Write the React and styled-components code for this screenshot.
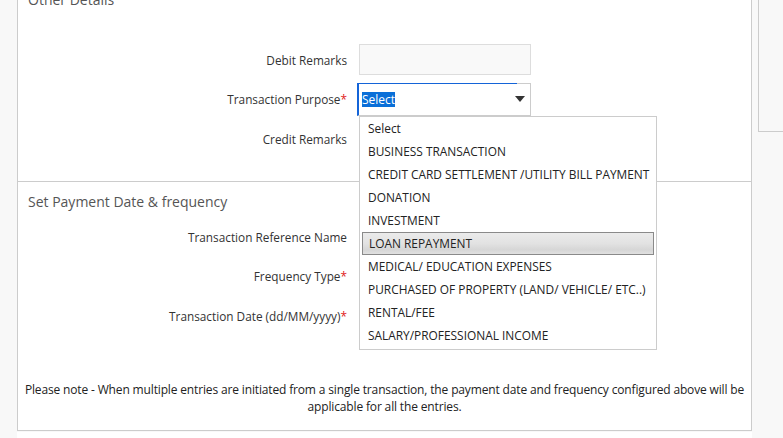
import styled, { createGlobalStyle } from "styled-components";

const purposes = [
  "Select",
  "BUSINESS TRANSACTION",
  "CREDIT CARD SETTLEMENT /UTILITY BILL PAYMENT",
  "DONATION",
  "INVESTMENT",
  "LOAN REPAYMENT",
  "MEDICAL/ EDUCATION EXPENSES",
  "PURCHASED OF PROPERTY (LAND/ VEHICLE/ ETC..)",
  "RENTAL/FEE",
  "SALARY/PROFESSIONAL INCOME",
];

const GlobalStyle = createGlobalStyle`
  html, body {
    margin: 0;
    background: #f8f8f8;
    font-family: "Open Sans", "Noto Sans", sans-serif;
    color: #333;
    overflow: hidden;
  }
`;

const App = () => {
  return (
    <>
      <GlobalStyle />
      <Page>
        <Panel>
          <Section $divided>
            <SectionTitle>Other Details</SectionTitle>
            <FormGrid>
              <Label>Debit Remarks</Label>
              <TextInput />
              <Label>
                Transaction Purpose<Required>*</Required>
              </Label>
              <SelectWrap>
                <SelectBox>
                  <Selected>Select</Selected>
                  <Arrow />
                </SelectBox>
                <DropList>
                  {purposes.map((p) => (
                    <DropItem key={p} $active={p === "LOAN REPAYMENT"}>
                      {p}
                    </DropItem>
                  ))}
                </DropList>
              </SelectWrap>
              <Label>Credit Remarks</Label>
              <TextInput />
            </FormGrid>
          </Section>
          <Section>
            <SectionTitle $second>Set Payment Date &amp; frequency</SectionTitle>
            <FormGrid>
              <Label>Transaction Reference Name</Label>
              <TextInput />
              <Label>
                Frequency Type<Required>*</Required>
              </Label>
              <TextInput />
              <Label>
                Transaction Date (dd/MM/yyyy)<Required>*</Required>
              </Label>
              <TextInput />
            </FormGrid>
            <Note>
              Please note - When multiple entries are initiated from a single
              transaction, the payment date and frequency configured above will
              be applicable for all the entries.
            </Note>
          </Section>
        </Panel>
        <SideBox />
      </Page>
      <NextPanel />
    </>
  );
};

const Page = styled.div`
  display: flex;
  align-items: flex-start;
  margin-top: -21px;
  padding-left: 17px;
`;

const Panel = styled.div`
  width: 733px;
  flex-shrink: 0;
  background: #fff;
  border: 1px solid #ccc;
`;

const SideBox = styled.div`
  margin-left: 6px;
  flex: 1;
  height: 151px;
  border: 1px solid #ccc;
  border-right: none;
  background: #f8f8f8;
`;

const NextPanel = styled.div`
  margin: 1px 0 0 17px;
  width: 735px;
  height: 20px;
  background: #fff;
`;

const Section = styled.div`
  padding: 10px 0 ${({ $divided }) => ($divided ? "27px" : "15px")};
  border-bottom: ${({ $divided }) => ($divided ? "1px solid #ccc" : "none")};
`;

const SectionTitle = styled.div`
  padding-left: 10px;
  font-size: 14px;
  line-height: 20px;
  color: #555;
  margin-bottom: ${({ $second }) => ($second ? "9px" : "34px")};
`;

const FormGrid = styled.div`
  display: grid;
  grid-template-columns: 329px 172px;
  grid-auto-rows: 31px;
  column-gap: 12px;
  row-gap: 8.5px;
  align-items: center;
`;

const Label = styled.div`
  text-align: right;
  font-size: 11.8px;
  color: #333;
`;

const Required = styled.span`
  color: #e02020;
`;

const TextInput = styled.div`
  box-sizing: border-box;
  height: 31px;
  background: #f9f9f9;
  border: 1px solid #ddd;
`;

const SelectWrap = styled.div`
  position: relative;
  height: 31px;
  margin-left: -2px;
  z-index: 2;
`;

const SelectBox = styled.div`
  box-sizing: border-box;
  position: relative;
  height: 33px;
  margin-top: -1px;
  display: flex;
  align-items: center;
  justify-content: space-between;
  padding: 0 4px 0 3px;
  background: #fff;
  border: 1px solid #ccc;
  border-left: 2px solid #1464d8;

  &::before {
    content: "";
    position: absolute;
    top: -1px;
    left: -2px;
    width: 160px;
    height: 1px;
    background: #1464d8;
  }
`;

const Selected = styled.span`
  font-size: 12px;
  line-height: 15px;
  color: #fff;
  background: #0a6fd8;
`;

const Arrow = styled.span`
  width: 0;
  height: 0;
  border-left: 5px solid transparent;
  border-right: 5px solid transparent;
  border-top: 6px solid #333;
  margin-right: 1px;
`;

const DropList = styled.ul`
  position: absolute;
  top: 32px;
  left: 2px;
  width: 298px;
  box-sizing: border-box;
  margin: 0;
  padding: 0 0 2px;
  list-style: none;
  background: #fff;
  border: 1px solid #ccc;
`;

const DropItem = styled.li`
  height: 23px;
  line-height: 23px;
  padding-left: 8px;
  font-size: 11.9px;
  color: #222;
  white-space: nowrap;
  ${({ $active }) =>
    $active &&
    `
    box-sizing: border-box;
    margin: 0 2px;
    padding-left: 6px;
    line-height: 21px;
    border: 1px solid #8a8a8a;
    background: linear-gradient(#ebebeb, #e2e2e2 50%, #d6d6d6 80%, #e0e0e0);
  `}
`;

const Note = styled.p`
  margin: 50px 0 0;
  text-align: center;
  font-size: 12px;
  letter-spacing: -0.15px;
  line-height: 17px;
  color: #222;
`;

export default App;
